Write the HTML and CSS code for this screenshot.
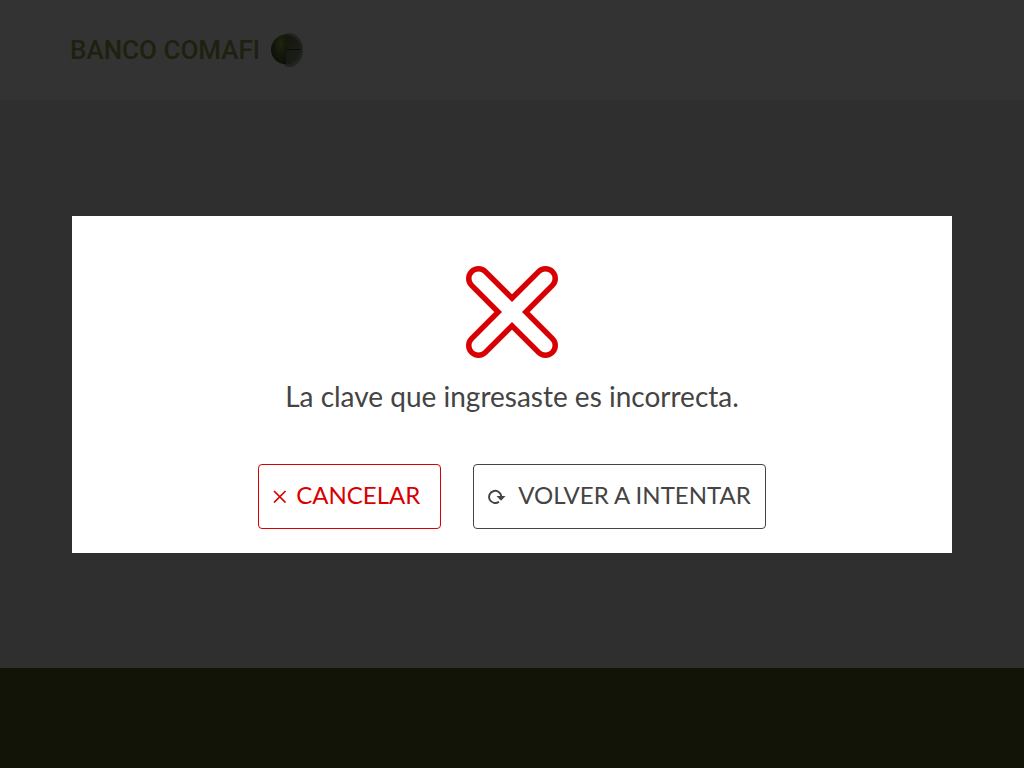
FILE: index.html
```html
<!DOCTYPE html>
<html lang="es">
<head>
  <meta charset="utf-8">
  <meta name="viewport" content="width=device-width, initial-scale=1">
  <title>Banco Comafi</title>
  <link rel="stylesheet" href="styles.css">
</head>
<body class="page">
  <header class="header">
    <a class="brand" href="#">
      <span class="brand-name">BANCO COMAFI</span>
      <svg class="brand-mark" viewBox="0 0 32 34" aria-hidden="true">
        <defs>
          <radialGradient id="left" cx="0.65" cy="0.3" r="0.75">
            <stop offset="0" stop-color="#1f240e"/>
            <stop offset="0.5" stop-color="#14180b"/>
            <stop offset="1" stop-color="#0b0e09"/>
          </radialGradient>
          <linearGradient id="right" x1="0" y1="0" x2="1" y2="1">
            <stop offset="0" stop-color="#14160f"/>
            <stop offset="1" stop-color="#1c1e18"/>
          </linearGradient>
        </defs>
        <path d="M14 1a16 16 0 0 1 4-1 14 17 0 0 1 0 34 16 16 0 0 1-4-1z" fill="#222421"/>
        <path d="M14 1.500a16 15 0 0 1 16 14.500H14zM14 17h16a16 15 0 0 1-16 14.500z" fill="url(#right)"/>
        <path d="M14 16.500h16" stroke="#0b0d09"/>
        <path d="M15 1.500a15 15 0 0 0 0 30z" fill="url(#left)"/>
      </svg>
    </a>
  </header>
  <main class="content"></main>
  <footer class="footer"></footer>

  <div class="overlay">
    <section class="dialog" role="alertdialog" aria-modal="true" aria-labelledby="message">
      <svg class="error-icon" viewBox="0 0 92 92" aria-hidden="true">
        <path d="M12.500 12.500l67 67M79.500 12.500l-67 67" fill="none" stroke="#d80000" stroke-width="25" stroke-linecap="round"/>
        <path d="M12.500 12.500l67 67M79.500 12.500l-67 67" fill="none" stroke="#fff" stroke-width="14" stroke-linecap="round"/>
      </svg>
      <h1 class="message" id="message">La clave que ingresaste es incorrecta.</h1>
      <div class="actions">
        <button class="button button-cancel" type="button">
          <svg class="icon-cancel" viewBox="0 0 14 16" aria-hidden="true">
            <path d="M1 4l11.500 11.500M12.500 4l-11.500 11.500" fill="none" stroke="currentColor" stroke-width="1.700"/>
          </svg>
          <span>CANCELAR</span>
        </button>
        <button class="button button-retry" type="button">
          <svg class="icon-retry" viewBox="0 0 18 18" aria-hidden="true">
            <path d="M11 15.700A6.100 6.100 0 1 1 13.300 11" fill="none" stroke="currentColor" stroke-width="1.900"/>
            <path d="M8.500 10H17.500L13 14.800z" fill="currentColor"/>
          </svg>
          <span>VOLVER A INTENTAR</span>
        </button>
      </div>
    </section>
  </div>
</body>
</html>
```
FILE: styles.css
```css
* {
  box-sizing: border-box;
}

.page {
  display: flex;
  flex-direction: column;
  min-height: 100vh;
  margin: 0;
  background: #2f2f2f;
  font-family: Lato, "Liberation Sans", sans-serif;
}

.header {
  display: flex;
  align-items: center;
  height: 100px;
  padding: 0 70px;
  background: #333;
}

.brand {
  display: flex;
  align-items: center;
  gap: 11px;
  color: #1d210f;
  text-decoration: none;
}

.brand-name {
  font: 500 26px/32px Roboto, "Liberation Sans", sans-serif;
}

.brand-mark {
  width: 32px;
  height: 34px;
}

.content {
  flex: 1;
}

.footer {
  height: 100px;
  background: #121407;
}

.overlay {
  position: fixed;
  inset: 0;
  display: flex;
  align-items: center;
  padding: 0 72px;
}

.dialog {
  display: flex;
  flex-direction: column;
  align-items: center;
  width: 100%;
  padding: 50px 24px 24px;
  background: #fff;
}

.error-icon {
  width: 92px;
  height: 92px;
}

.message {
  margin: 20px 0 50px;
  color: #444;
  font-size: 28px;
  font-weight: 400;
  line-height: 36px;
  text-align: center;
}

.actions {
  display: flex;
  flex-wrap: wrap;
  justify-content: center;
  gap: 32px;
}

.button {
  display: flex;
  align-items: center;
  height: 65px;
  padding: 0 14px 2px;
  border: 1px solid currentColor;
  border-radius: 4px;
  background: #fff;
  font: 24px/32px Lato, "Liberation Sans", sans-serif;
  cursor: pointer;
}

.button-cancel {
  gap: 9px;
  padding-right: 20px;
  color: #d80000;
}

.button-retry {
  gap: 12px;
  color: #444;
}

.icon-cancel {
  width: 14px;
  height: 16px;
}

.icon-retry {
  width: 18px;
  height: 18px;
}
```
